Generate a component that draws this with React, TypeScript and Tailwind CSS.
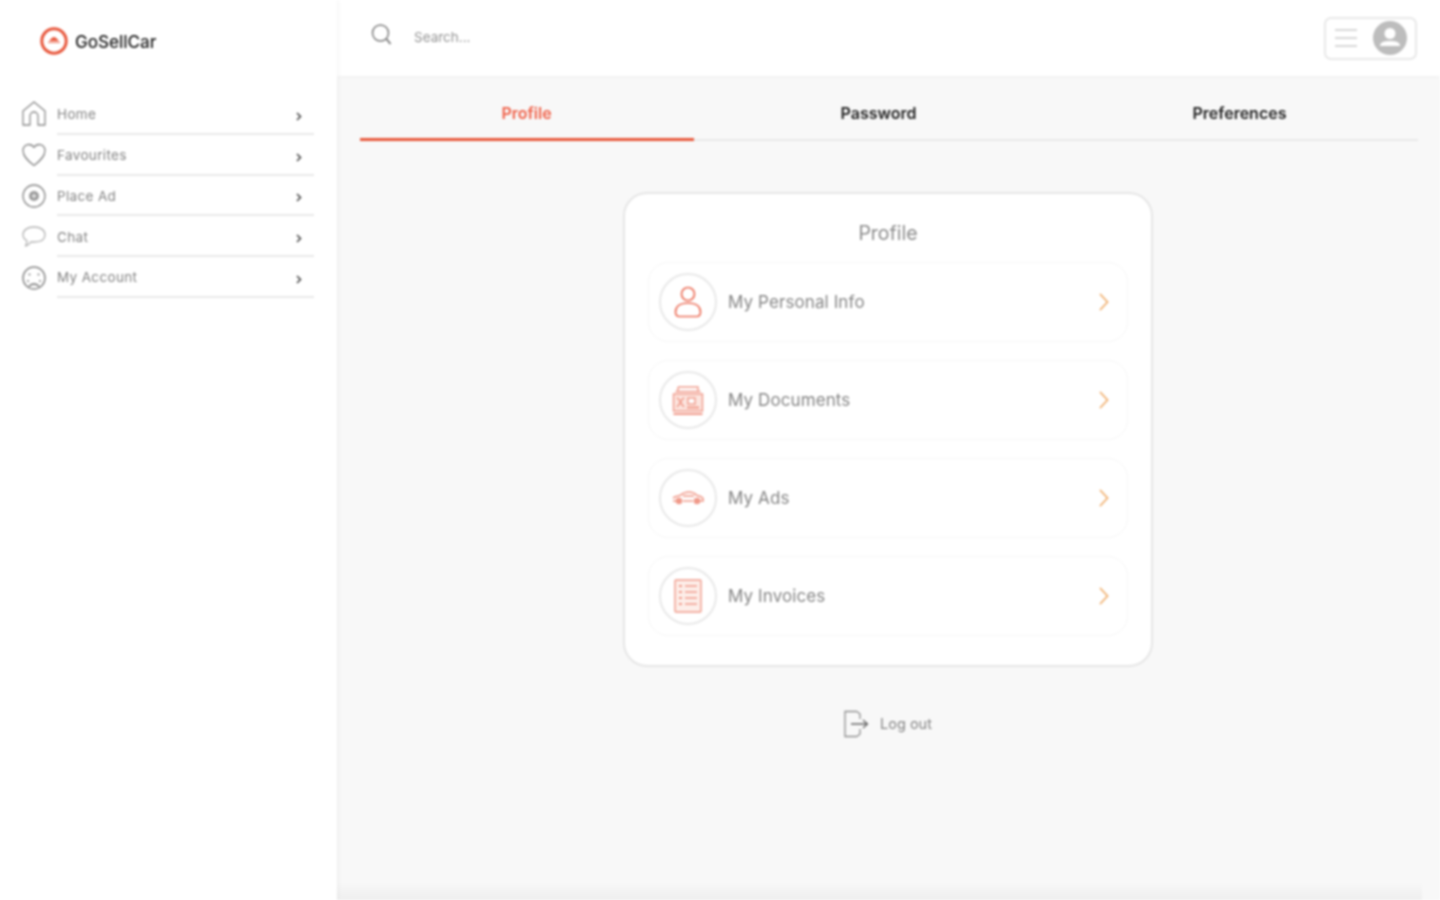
import React from "react";

const font = { fontFamily: "Inter, 'Liberation Sans', sans-serif" };

function Logo() {
  return (
    <svg width="28" height="28" viewBox="0 0 28 28" fill="none">
      <circle cx="14" cy="14" r="12.2" stroke="#e8583d" strokeWidth="3" />
      <path d="M8 16 C10 12.5 12 10 14 10 C16 10 18 12.5 20 16 Z" fill="#e8583d" />
      <rect x="9" y="14.2" width="10" height="1" fill="#fff" />
    </svg>
  );
}

const side = { stroke: "#8b8b8b", strokeWidth: 1.3, fill: "none" };

function HomeIcon() {
  return (
    <svg width="24" height="26" viewBox="0 0 24 26" {...side}>
      <path d="M1 10 L12 1 L23 10 V24 H16 V15 A4 4 0 0 0 8 15 V24 H1 Z" strokeLinejoin="round" />
    </svg>
  );
}
function HeartIcon() {
  return (
    <svg width="24" height="24" viewBox="0 0 24 24" {...side}>
      <path d="M12 22.5 C5 17 1 13 1 7.5 C1 3.5 4 1.5 6.8 1.5 C9 1.5 11 2.6 12 4.5 C13 2.6 15 1.5 17.2 1.5 C20 1.5 23 3.5 23 7.5 C23 13 19 17 12 22.5 Z" strokeLinejoin="round" />
    </svg>
  );
}
function PlaceIcon() {
  return (
    <svg width="24" height="24" viewBox="0 0 24 24" {...side}>
      <circle cx="12" cy="12" r="11" />
      <circle cx="12" cy="12" r="5" fill="#9a9a9a" stroke="none" />
      <path d="M12 9.5 V14.5 M9.5 12 H14.5" stroke="#fff" strokeWidth="1" />
    </svg>
  );
}
function ChatIcon() {
  return (
    <svg width="24" height="22" viewBox="0 0 24 22" fill="none" stroke="#b4b4b4" strokeWidth="1.3">
      <path d="M12 1 C18.5 1 23 4 23 8.8 C23 13.5 18.5 16 12 16 C11 16 10 16 9 15.8 C7.5 18 5.5 19.5 3.5 20 C4.6 18 5 16.4 5 14.8 C2.6 13.5 1 11.5 1 8.8 C1 4 5.5 1 12 1 Z" strokeLinejoin="round" />
    </svg>
  );
}
function AccountIcon() {
  return (
    <svg width="24" height="24" viewBox="0 0 24 24" {...side}>
      <circle cx="12" cy="12" r="11" strokeWidth="1.5" />
      <circle cx="7.5" cy="8.5" r="1.1" fill="#8b8b8b" stroke="none" />
      <circle cx="16.5" cy="8.5" r="1.1" fill="#8b8b8b" stroke="none" />
      <circle cx="6" cy="15" r="1" fill="#8b8b8b" stroke="none" />
      <circle cx="18" cy="15" r="1" fill="#8b8b8b" stroke="none" />
      <path d="M7 20.5 C8.5 18.5 10 18 12 18 C14 18 15.5 18.5 17 20.5" strokeWidth="1.8" />
    </svg>
  );
}

function SmallChevron() {
  return (
    <svg className="mt-[4px]" width="6" height="9" viewBox="0 0 6 9" fill="none" stroke="#4a4a4a" strokeWidth="1.6">
      <path d="M1 1 L4.5 4.5 L1 8" />
    </svg>
  );
}

const menu = [
  { label: "Home", icon: <HomeIcon /> },
  { label: "Favourites", icon: <HeartIcon /> },
  { label: "Place Ad", icon: <PlaceIcon /> },
  { label: "Chat", icon: <ChatIcon /> },
  { label: "My Account", icon: <AccountIcon /> },
];

const red = { stroke: "#f09a8a", strokeWidth: 1.4, fill: "none" };

function PersonIcon() {
  return (
    <svg width="30" height="34" viewBox="0 0 30 34" stroke="#ec6f59" strokeWidth="1.7" fill="none">
      <circle cx="15" cy="9" r="6.5" />
      <path d="M15 18 C7 18 2.5 21.5 2.5 27 C2.5 30 4 31.5 6.5 31.5 H23.5 C26 31.5 27.5 30 27.5 27 C27.5 21.5 23 18 15 18 Z" />
    </svg>
  );
}
function DocsIcon() {
  return (
    <svg width="32" height="32" viewBox="0 0 32 32" {...red}>
      <path d="M6 3 H26 V7 M6 3 V7 M3.5 7.5 H28.5" />
      <rect x="1.5" y="10" width="29" height="17" fill="#fce4de" />
      <path d="M5 13.5 L9 18 L5 23 M12 13.5 L8 18 L12 23" />
      <rect x="16" y="14" width="7" height="6" fill="#fff" />
      <path d="M15 23.5 H27 M1.5 30 H30.5" strokeWidth="1.8" />
    </svg>
  );
}
function CarIcon() {
  return (
    <svg width="32" height="14" viewBox="0 0 32 14" {...red} strokeWidth="1.6">
      <path d="M1 7 C3 5.5 6 5 8 4.5 C11 2 14 1 17 1 C20 1 23 2.5 25 4.5 C27.5 5 30 6 31 7.5 V10 H27 M21 10 H11 M5 10 H1 Z" />
      <path d="M11 5 H22" />
      <circle cx="7" cy="10" r="2.5" fill="#f09a8a" />
      <circle cx="25" cy="10" r="2.5" fill="#f09a8a" />
    </svg>
  );
}
function InvoiceIcon() {
  return (
    <svg width="28" height="34" viewBox="0 0 28 34" {...red}>
      <rect x="1" y="1" width="26" height="32" rx="1" fill="#fdeee9" />
      <path d="M11 7 H23 M11 13 H23 M11 19 H23 M11 25 H23" />
      <path d="M5 7 H8 M5 13 H8 M5 19 H8 M5 25 H8" strokeWidth="2" />
    </svg>
  );
}

const rows = [
  { label: "My Personal Info", icon: <PersonIcon /> },
  { label: "My Documents", icon: <DocsIcon /> },
  { label: "My Ads", icon: <CarIcon /> },
  { label: "My Invoices", icon: <InvoiceIcon /> },
];

function RowChevron() {
  return (
    <svg width="10" height="18" viewBox="0 0 10 18" fill="none" stroke="#f0b070" strokeWidth="1.8" strokeLinecap="round">
      <path d="M1.5 1.5 L8.5 9 L1.5 16.5" />
    </svg>
  );
}

export default function App() {
  return (
    <div style={font} className="relative flex h-[900px] w-[1440px] overflow-hidden bg-white blur-[0.8px]">
      <aside className="relative z-10 flex h-full w-[337px] shrink-0 flex-col bg-white shadow-[1px_0_4px_rgba(0,0,0,0.05)]">
        <div className="flex h-[82px] items-center gap-[7px] pl-[40px]">
          <Logo />
          <span className="mt-[1px] text-[17.2px] font-medium tracking-[-0.1px] text-[#222]">GoSellCar</span>
        </div>
        <nav className="flex flex-col pl-[22px] pr-[23px] pt-[12px]">
          {menu.map((m) => (
            <div key={m.label} className="flex h-[40.8px] items-center">
              <div className="flex w-[35px] shrink-0 items-center">{m.icon}</div>
              <div className="flex h-full flex-1 items-center justify-between border-b-2 border-[#e9e9e9] pr-[12px] pt-[2px]">
                <span className="text-[13.5px] tracking-[0.35px] text-[#858585]">{m.label}</span>
                <SmallChevron />
              </div>
            </div>
          ))}
        </nav>
      </aside>

      <div className="flex h-full flex-1 flex-col bg-[#f8f8f8]">
        <header className="relative z-[5] flex h-[76px] shrink-0 items-center justify-between bg-white pl-[34px] pr-[23px] shadow-[0_1px_4px_rgba(0,0,0,0.04)]">
          <div className="flex items-center gap-[21px]">
            <svg className="mb-[7px]" width="22" height="24" viewBox="0 0 22 24" fill="none" stroke="#7d7d7d" strokeWidth="1.5">
              <circle cx="9.5" cy="10" r="8" />
              <path d="M15.5 16 L19.5 21" strokeWidth="2" />
            </svg>
            <span className="-mt-[1px] text-[13.5px] text-[#949494]">Search...</span>
          </div>
          <div className="flex h-[43px] w-[93px] items-center justify-between rounded-[7px] border-2 border-[#e8e8e8] pl-[9px] pr-[8px]">
            <div className="flex w-[22px] flex-col gap-[6px]">
              <div className="h-[2px] bg-[#d8d8d8]" />
              <div className="h-[2px] bg-[#d8d8d8]" />
              <div className="h-[2px] bg-[#d8d8d8]" />
            </div>
            <svg width="34" height="34" viewBox="0 0 34 34">
              <circle cx="17" cy="17" r="17" fill="#bdbdbd" />
              <circle cx="17" cy="12.5" r="5.5" fill="#fff" />
              <path d="M7 25 C7 21 11 20 17 20 C23 20 27 21 27 25 Z" fill="#fff" />
            </svg>
          </div>
        </header>

        <main className="flex flex-1 flex-col items-center">
          <div className="flex h-[65px] w-[1058px] shrink-0 border-b-2 border-[#e9e9e9] text-[16px] font-semibold">
            <div className="-mb-[2px] flex w-[334px] items-center justify-center border-b-[3px] border-[#e8593c] pt-[11px] text-[#f0624a]">Profile</div>
            <div className="flex w-[370px] items-center justify-center pt-[11px] text-[#222]">Password</div>
            <div className="flex w-[354px] items-center justify-center pr-[2px] pt-[11px] text-[#222]">Preferences</div>
          </div>

          <section className="mr-[1px] mt-[51px] flex h-[475px] w-[530px] flex-col rounded-[24px] border-2 border-[#e6e6e6] bg-white px-[23px] pt-[27px]">
            <h1 className="mb-[17px] text-center text-[19.5px] font-normal leading-[24px] text-[#8c8c8c]">Profile</h1>
            <div className="flex flex-col gap-[18px]">
              {rows.map((r) => (
                <div key={r.label} className="flex h-[80px] items-center justify-between rounded-[20px] border border-[#f7f7f7] pl-[10px] pr-[18px]">
                  <div className="flex items-center gap-[11px]">
                    <div className="flex h-[58px] w-[58px] items-center justify-center rounded-full border-2 border-[#e9e9e9]">{r.icon}</div>
                    <span className="pt-[2px] text-[17px] tracking-[0.1px] text-[#858585]">{r.label}</span>
                  </div>
                  <RowChevron />
                </div>
              ))}
            </div>
          </section>

          <div className="mr-[2px] mt-[43px] flex h-[28px] items-center gap-[11px]">
            <svg width="26" height="28" viewBox="0 0 26 28" fill="none" stroke="#8f8f8f" strokeWidth="1.3">
              <path d="M14 1.5 H2 V26.5 H14 M14 1.5 L17 4 V9 M17 19 V24 L14 26.5" />
              <path d="M8 14 H24 M20 10 L24.5 14 L20 18" stroke="#666" />
            </svg>
            <span className="text-[14.5px] text-[#858585]">Log out</span>
          </div>
        </main>
      </div>

      <div className="pointer-events-none absolute bottom-0 left-[140px] h-[14px] w-[197px] bg-gradient-to-b from-transparent to-[#00000007]" />
      <div className="pointer-events-none absolute bottom-0 left-[337px] right-[18px] h-[18px] bg-gradient-to-b from-transparent to-[#0000000a]" />
    </div>
  );
}
